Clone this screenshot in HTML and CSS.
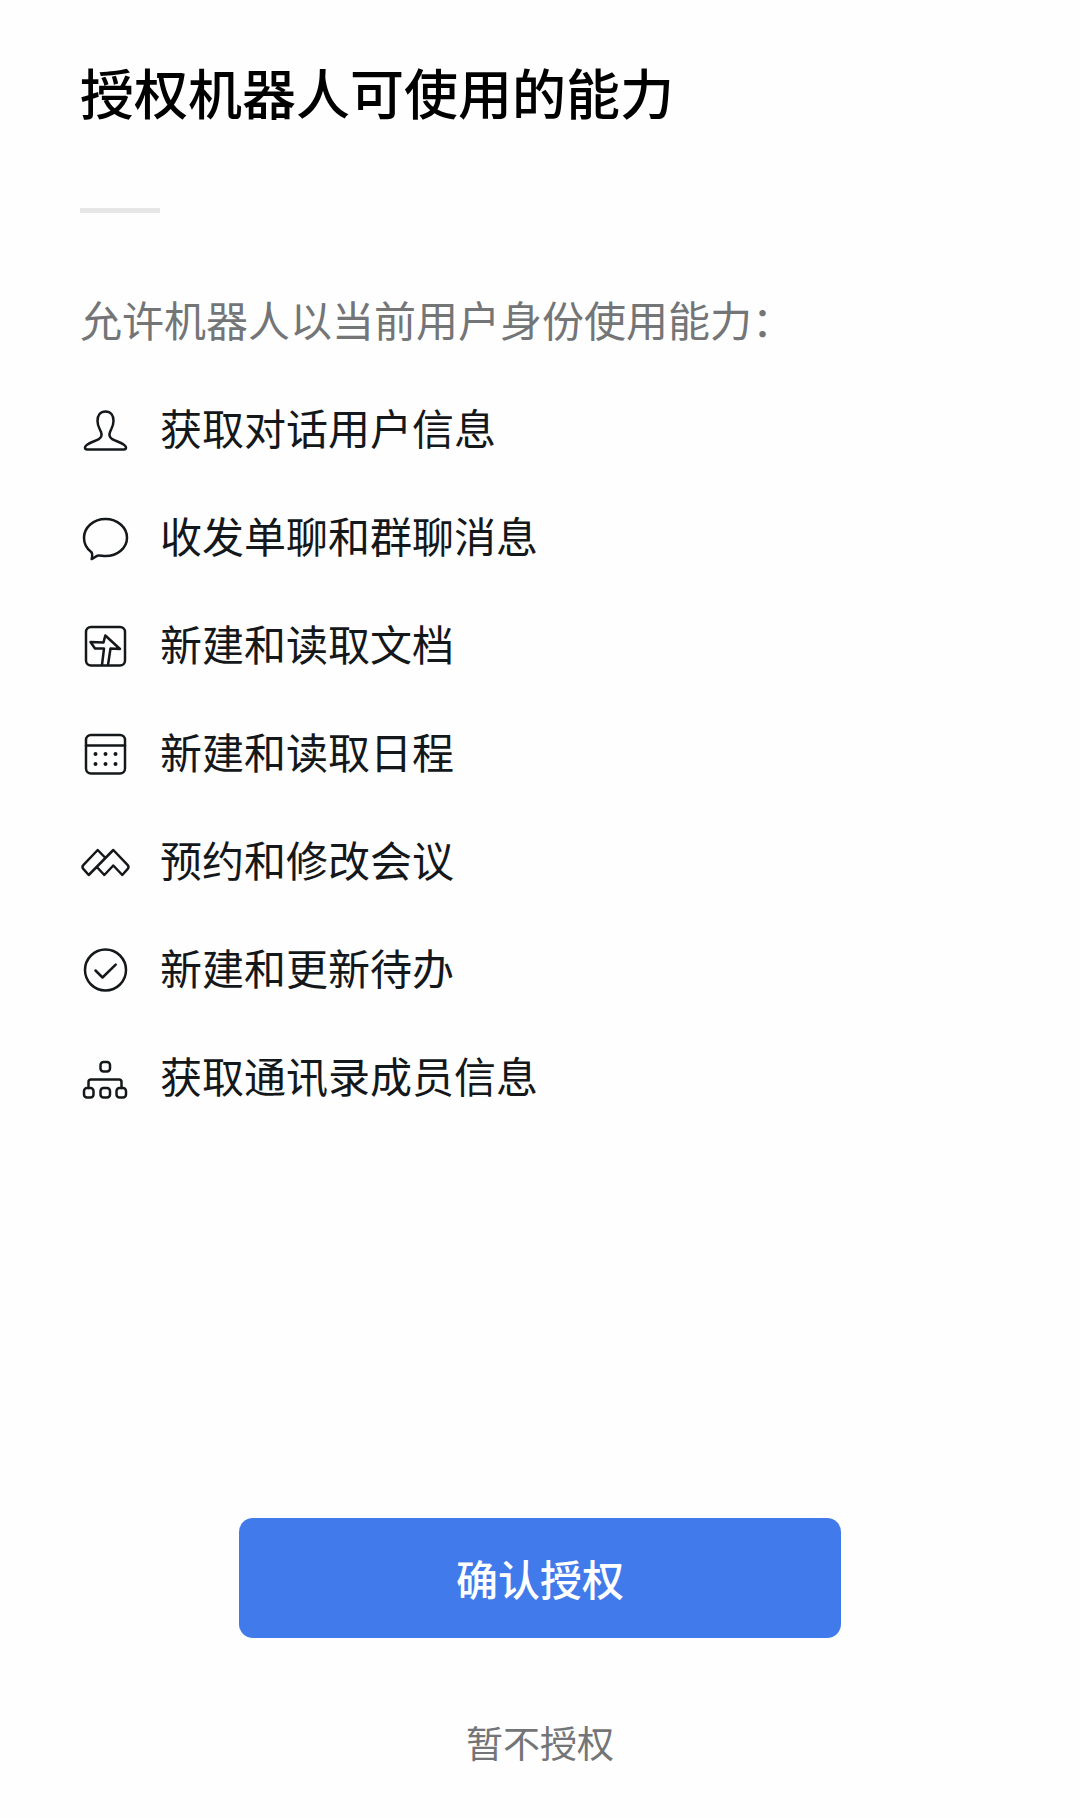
FILE: index.html
```html
<!DOCTYPE html>
<html lang="zh-CN">
<head>
    <meta charset="UTF-8">
    <meta name="viewport" content="width=device-width, initial-scale=1.0">
    <title>授权机器人可使用的能力</title>
    <link rel="stylesheet" href="styles.css">
</head>
<body>
<main class="page">
    <h1 class="title">授权机器人可使用的能力</h1>
    <hr class="divider">
    <p class="desc">允许机器人以当前用户身份使用能力：</p>

    <!-- 权限列表 -->
    <ul class="scope-list">
        <li class="scope">
            <svg class="icon" viewBox="0 0 50 50" aria-hidden="true">
                <path d="M25.500 6.500c-5.200 0-8 3.800-8 9.400 0 5.200 2.100 7.600 3.400 10.900 1.300 3.100.6 5.700-2.100 7.300C14.500 36.700 5 38.600 5 42.500c0 1.300.8 2 2.200 2h36.600c1.400 0 2.200-.7 2.200-2 0-3.900-9.500-5.800-13.800-8.400-2.700-1.600-3.400-4.200-2.100-7.300 1.300-3.300 3.400-5.700 3.400-10.900 0-5.600-2.800-9.400-8-9.400z"/>
            </svg>
            <span class="scope-name">获取对话用户信息</span>
        </li>
        <li class="scope">
            <svg class="icon" viewBox="0 0 50 50" aria-hidden="true">
                <path d="M11.200 39C6.700 35.700 4 30.500 4 24.800 4 14.400 13.500 6 25.500 6S47 14.500 47 24.700 37.500 43 25.500 43c-2.700 0-4.900-.8-7.200-.6-2.200.2-4.200 2.800-6.600 3.600.6-2.600 1-5.500-.5-7z"/>
            </svg>
            <span class="scope-name">收发单聊和群聊消息</span>
        </li>
        <li class="scope">
            <svg class="icon" viewBox="0 0 50 50" aria-hidden="true">
                <rect x="6" y="6" width="39" height="38.5" rx="5"/>
                <path d="M22 44l2-16.500h-9L10.500 21l13 .5 1.800-7L40 28l-9.500-.5L28 44"/>
            </svg>
            <span class="scope-name">新建和读取文档</span>
        </li>
        <li class="scope">
            <svg class="icon" viewBox="0 0 50 50" aria-hidden="true">
                <rect x="6" y="6" width="39" height="38.5" rx="5"/>
                <path d="M6 16.500h39"/>
                <g class="dots">
                    <circle cx="15.5" cy="25" r="2"/>
                    <circle cx="25.5" cy="25" r="2"/>
                    <circle cx="35.5" cy="25" r="2"/>
                    <circle cx="15.5" cy="35" r="2"/>
                    <circle cx="25.5" cy="35" r="2"/>
                    <circle cx="35.5" cy="35" r="2"/>
                </g>
            </svg>
            <span class="scope-name">新建和读取日程</span>
        </li>
        <li class="scope">
            <svg class="icon" viewBox="0 0 50 50" aria-hidden="true">
                <path d="M25 20.500L17.700 13 3.500 27.800q-2 2.200 0 4.400L8.700 38 33.300 13l14.200 14.800q2 2.200 0 4.400L42.300 38l-9-9.500-9 9.500-7-7.500"/>
            </svg>
            <span class="scope-name">预约和修改会议</span>
        </li>
        <li class="scope">
            <svg class="icon" viewBox="0 0 50 50" aria-hidden="true">
                <circle cx="25.5" cy="25" r="20.5"/>
                <path d="M15.500 25.500l7 7 13.200-12.800"/>
            </svg>
            <span class="scope-name">新建和更新待办</span>
        </li>
        <li class="scope">
            <svg class="icon" viewBox="0 0 50 50" aria-hidden="true">
                <rect x="20.5" y="9" width="9.5" height="9.5" rx="3"/>
                <rect x="4" y="35" width="9.5" height="9.5" rx="3"/>
                <rect x="20.5" y="35" width="9.5" height="9.5" rx="3"/>
                <rect x="36.500" y="35" width="9.5" height="9.5" rx="3"/>
                <path d="M8.500 35v-6q0-2.500 2.500-2.500h28q2.500 0 2.500 2.500v6"/>
            </svg>
            <span class="scope-name">获取通讯录成员信息</span>
        </li>
    </ul>

    <!-- 底部操作 -->
    <div class="actions">
        <button class="btn-confirm" type="button">确认授权</button>
        <button class="btn-cancel" type="button">暂不授权</button>
    </div>
</main>
</body>
</html>
```
FILE: styles.css
```css
* {
    margin: 0;
    padding: 0;
    box-sizing: border-box;
}

body {
    font-family: "Noto Sans CJK SC", "PingFang SC", "Microsoft YaHei", sans-serif;
    background: #fefefe;
    color: #15181a;
}

.page {
    display: flex;
    flex-direction: column;
    min-height: 100vh;
    padding: 52px 80px 48px;
}

.title {
    font-size: 54px;
    font-weight: 500;
    line-height: 80px;
    color: #000;
}

.divider {
    width: 80px;
    height: 5px;
    margin-top: 76px;
    border: none;
    background: #e6e6e6;
}

.desc {
    margin-top: 78px;
    font-size: 42px;
    line-height: 56px;
    color: #737577;
}

/* 权限列表 */
.scope-list {
    display: flex;
    flex-direction: column;
    gap: 46px;
    margin-top: 52px;
    list-style: none;
}

.scope {
    display: flex;
    align-items: center;
    gap: 30px;
}

.scope-name {
    padding-bottom: 6px;
    font-size: 42px;
    line-height: 56px;
}

.icon {
    flex: none;
    width: 50px;
    height: 50px;
    fill: none;
    stroke: #15181a;
    stroke-width: 2.5;
    stroke-linecap: round;
    stroke-linejoin: round;
}

.icon .dots {
    fill: #15181a;
    stroke: none;
}

/* 底部按钮 */
.actions {
    display: flex;
    flex-direction: column;
    align-items: center;
    gap: 76px;
    margin-top: auto;
    padding-top: 80px;
}

button {
    border: none;
    font-family: inherit;
    cursor: pointer;
}

.btn-confirm {
    width: 100%;
    max-width: 602px;
    height: 120px;
    padding-bottom: 2px;
    border-radius: 14px;
    background: #417aea;
    color: #fff;
    font-size: 42px;
    font-weight: 500;
}

.btn-cancel {
    background: none;
    color: #737577;
    font-size: 37px;
    line-height: 56px;
}
```
